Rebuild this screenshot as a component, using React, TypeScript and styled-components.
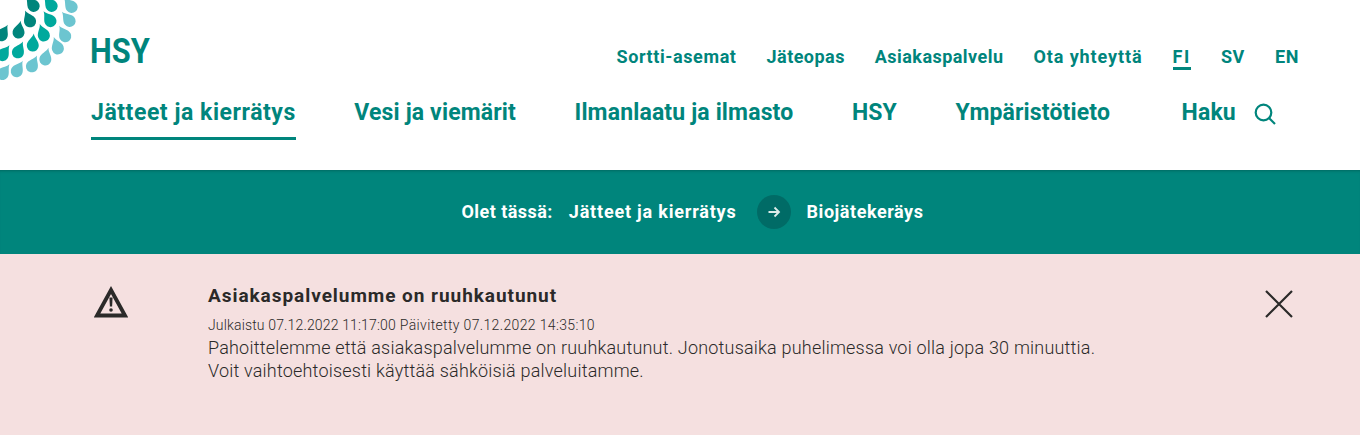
import React from "react";
import styled, { createGlobalStyle } from "styled-components";

const GlobalStyle = createGlobalStyle`
  html, body {
    margin: 0;
    padding: 0;
    background: #fff;
  }
  body {
    font-family: "Roboto", "Liberation Sans", sans-serif;
  }
`;

const TEAL = "#00857c";

const Header = styled.header`
  position: relative;
  height: 170px;
  box-sizing: border-box;
  padding: 41px 61px 0 91px;
  background: #fff;
`;

const LogoMark = styled.svg`
  position: absolute;
  top: 0;
  left: 0;
`;

const LogoText = styled.div`
  position: absolute;
  top: 32px;
  left: 90px;
  color: ${TEAL};
  font-size: 35px;
  line-height: 40px;
  font-weight: 700;
  transform: scaleX(0.88);
  transform-origin: left center;
`;

const TopRow = styled.div`
  display: flex;
  justify-content: flex-end;
  align-items: center;
  height: 34px;
`;

const TopLink = styled.a<{ $active?: boolean; $ls?: number }>`
  margin-left: 30px;
  border-bottom: 3px solid ${p => (p.$active ? TEAL : "transparent")};
  color: ${TEAL};
  font-size: 18px;
  line-height: 20px;
  font-weight: 700;
  letter-spacing: ${p => p.$ls ?? 0.6}px;
`;

const MainRow = styled.nav`
  display: flex;
  align-items: flex-start;
  margin-top: 25px;
`;

const MainLink = styled.a<{ $active?: boolean }>`
  margin-right: 58.5px;
  padding-bottom: 11px;
  border-bottom: 3px solid ${p => (p.$active ? TEAL : "transparent")};
  color: ${TEAL};
  font-size: 23px;
  line-height: 26px;
  font-weight: 700;
  letter-spacing: ${p => (p.$active ? 0.55 : 0.15)}px;
`;

const SearchBox = styled.div`
  display: flex;
  align-items: flex-start;
  gap: 18px;
  margin-left: 13px;
  color: ${TEAL};
  font-size: 23px;
  line-height: 26px;
  font-weight: 700;
  letter-spacing: 0.15px;
`;

const SearchIcon = styled.svg`
  margin-top: 3px;
`;

const Breadcrumb = styled.div`
  display: flex;
  justify-content: center;
  align-items: center;
  height: 84px;
  box-sizing: border-box;
  padding: 0 0 1px 25px;
  background: ${TEAL};
  box-shadow: inset 0 3px 3px -2px rgba(0, 0, 0, 0.22);
  color: #fff;
  font-size: 18px;
  font-weight: 700;
`;

const CrumbLabel = styled.span`
  margin-right: 16px;
  letter-spacing: 0.45px;
`;

const CrumbLink = styled.span<{ $ls: number }>`
  letter-spacing: ${p => p.$ls}px;
`;

const CrumbArrow = styled.span`
  display: flex;
  align-items: center;
  justify-content: center;
  width: 34px;
  height: 34px;
  margin: 0 16px 0 20px;
  border-radius: 50%;
  background: #006b66;
`;

const Notice = styled.section`
  display: flex;
  height: 181px;
  box-sizing: border-box;
  padding: 32px 66px 0 94px;
  background: #f5e0e0;
  color: #2b2a29;
`;

const NoticeIcon = styled.div`
  width: 114px;
  flex-shrink: 0;
`;

const NoticeBody = styled.div`
  flex: 1;
`;

const NoticeTitle = styled.h2`
  margin: -1px 0 0;
  font-size: 19px;
  line-height: 22px;
  font-weight: 700;
  letter-spacing: 0.95px;
`;

const NoticeDates = styled.div`
  display: flex;
  gap: 4px;
  margin-top: 9px;
  font-size: 14px;
  line-height: 18px;
  font-weight: 300;
`;

const DateItem = styled.span<{ $ls: number }>`
  letter-spacing: ${p => p.$ls}px;
`;

const NoticeText = styled.p`
  margin: 2px 0 0;
  font-size: 18px;
  line-height: 23px;
  font-weight: 300;
  letter-spacing: 0.2px;
`;

const CloseButton = styled.button`
  display: flex;
  width: 30px;
  height: 30px;
  margin-top: 3px;
  padding: 0;
  border: none;
  background: none;
`;

const DARK = "#00857c";
const MID = "#00a99d";
const LIGHT = "#6cc5d0";

const drops = [
  { x: 32, y: 4, r: -40, c: DARK },
  { x: 50, y: 4, r: -40, c: MID },
  { x: 70, y: 5, r: -40, c: LIGHT },
  { x: 29, y: 19, r: -25, c: DARK },
  { x: 49, y: 19, r: -35, c: MID },
  { x: 68, y: 19, r: -40, c: LIGHT },
  { x: 19, y: 30, r: 10, c: DARK },
  { x: 43, y: 33, r: -20, c: MID },
  { x: 64, y: 34, r: -30, c: LIGHT },
  { x: 3, y: 33, r: 30, c: DARK },
  { x: 33, y: 43, r: 5, c: MID },
  { x: 57, y: 46, r: -20, c: LIGHT },
  { x: 19, y: 50, r: 25, c: MID },
  { x: 4, y: 53, r: 35, c: MID },
  { x: 46, y: 57, r: 15, c: LIGHT },
  { x: 33, y: 64, r: 25, c: LIGHT },
  { x: 18, y: 69, r: 30, c: LIGHT },
  { x: 4, y: 72, r: 35, c: LIGHT },
];

const Logo = () => (
  <LogoMark width="80" height="80" viewBox="0 0 80 80">
    {drops.map((d, i) => (
      <path
        key={i}
        d="M0 -9.5 C1 -5 6 -2 6 2.6 A6 6 0 0 1 -6 2.6 C-6 -2 -1 -5 0 -9.5 Z"
        fill={d.c}
        transform={`translate(${d.x} ${d.y}) rotate(${d.r})`}
      />
    ))}
  </LogoMark>
);

export default function App() {
  return (
    <>
      <GlobalStyle />
      <Header>
        <Logo />
        <LogoText>HSY</LogoText>
        <TopRow>
          <TopLink>Sortti-asemat</TopLink>
          <TopLink $ls={0.45}>Jäteopas</TopLink>
          <TopLink $ls={0.45}>Asiakaspalvelu</TopLink>
          <TopLink $ls={0.9}>Ota yhteyttä</TopLink>
          <TopLink $active $ls={1.6}>FI</TopLink>
          <TopLink>SV</TopLink>
          <TopLink>EN</TopLink>
        </TopRow>
        <MainRow>
          <MainLink $active>Jätteet ja kierrätys</MainLink>
          <MainLink>Vesi ja viemärit</MainLink>
          <MainLink>Ilmanlaatu ja ilmasto</MainLink>
          <MainLink>HSY</MainLink>
          <MainLink>Ympäristötieto</MainLink>
          <SearchBox>
            Haku
            <SearchIcon width="22" height="22" viewBox="0 0 22 22" fill="none" stroke={TEAL} strokeWidth="2.2">
              <circle cx="9.5" cy="9.5" r="7.8" />
              <path d="M15 15l6 6" />
            </SearchIcon>
          </SearchBox>
        </MainRow>
      </Header>
      <Breadcrumb>
        <CrumbLabel>Olet tässä:</CrumbLabel>
        <CrumbLink $ls={0.8}>Jätteet ja kierrätys</CrumbLink>
        <CrumbArrow>
          <svg width="14" height="14" viewBox="0 0 14 14" fill="none" stroke="#dcecea" strokeWidth="1.8">
            <path d="M1.5 7h10M7.5 2.5L12 7l-4.5 4.5" />
          </svg>
        </CrumbArrow>
        <CrumbLink $ls={0.55}>Biojätekeräys</CrumbLink>
      </Breadcrumb>
      <Notice>
        <NoticeIcon>
          <svg width="34" height="32" viewBox="0 0 34 32">
            <path d="M17 4L31 29.5H3Z" fill="none" stroke="#2b2a29" strokeWidth="3.8" />
            <path d="M15.4 11.5h3.2l-.5 9h-2.2Z" fill="#2b2a29" />
            <circle cx="17" cy="24" r="1.8" fill="#2b2a29" />
          </svg>
        </NoticeIcon>
        <NoticeBody>
          <NoticeTitle>Asiakaspalvelumme on ruuhkautunut</NoticeTitle>
          <NoticeDates>
            <DateItem $ls={0.15}>Julkaistu 07.12.2022 11:17:00</DateItem>
            <DateItem $ls={0.35}>Päivitetty 07.12.2022 14:35:10</DateItem>
          </NoticeDates>
          <NoticeText>
            Pahoittelemme että asiakaspalvelumme on ruuhkautunut. Jonotusaika puhelimessa voi olla jopa 30 minuuttia.
            <br />
            Voit vaihtoehtoisesti käyttää sähköisiä palveluitamme.
          </NoticeText>
        </NoticeBody>
        <CloseButton aria-label="Sulje">
          <svg width="30" height="30" viewBox="0 0 30 30" stroke="#2b2a29" strokeWidth="2.2">
            <path d="M2 2l26 26M28 2L2 28" />
          </svg>
        </CloseButton>
      </Notice>
    </>
  );
}
